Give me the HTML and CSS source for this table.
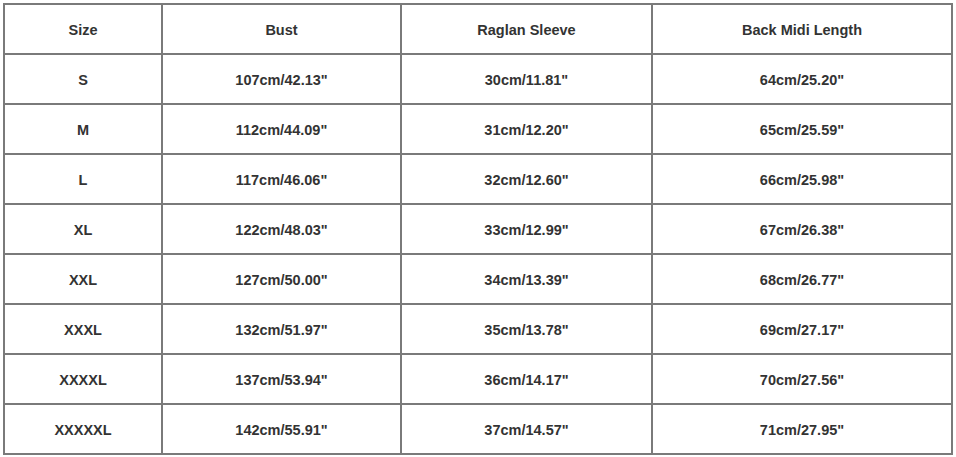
FILE: index.html
```html
<!DOCTYPE html>
<html>
<head>
<meta charset="utf-8">
<link rel="stylesheet" href="styles.css">
</head>
<body>
<div class="chart">
  <div class="cell">Size</div><div class="cell">Bust</div><div class="cell">Raglan Sleeve</div><div class="cell">Back Midi Length</div>
  <div class="cell">S</div><div class="cell">107cm/42.13"</div><div class="cell">30cm/11.81"</div><div class="cell">64cm/25.20"</div>
  <div class="cell">M</div><div class="cell">112cm/44.09"</div><div class="cell">31cm/12.20"</div><div class="cell">65cm/25.59"</div>
  <div class="cell">L</div><div class="cell">117cm/46.06"</div><div class="cell">32cm/12.60"</div><div class="cell">66cm/25.98"</div>
  <div class="cell">XL</div><div class="cell">122cm/48.03"</div><div class="cell">33cm/12.99"</div><div class="cell">67cm/26.38"</div>
  <div class="cell">XXL</div><div class="cell">127cm/50.00"</div><div class="cell">34cm/13.39"</div><div class="cell">68cm/26.77"</div>
  <div class="cell">XXXL</div><div class="cell">132cm/51.97"</div><div class="cell">35cm/13.78"</div><div class="cell">69cm/27.17"</div>
  <div class="cell">XXXXL</div><div class="cell">137cm/53.94"</div><div class="cell">36cm/14.17"</div><div class="cell">70cm/27.56"</div>
  <div class="cell">XXXXXL</div><div class="cell">142cm/55.91"</div><div class="cell">37cm/14.57"</div><div class="cell">71cm/27.95"</div>
</div>
</body>
</html>
```
FILE: styles.css
```css
html, body {
  margin: 0;
  padding: 0;
  background: #ffffff;
}
body {
  padding: 3px 0 0 3px;
  font-family: "Liberation Sans", Arial, sans-serif;
}
.chart {
  display: grid;
  grid-template-columns: 156px 237px 249px 298px;
  grid-auto-rows: 48px;
  gap: 2px;
  padding: 2px;
  width: max-content;
  background: #7a7a7a;
}
.cell {
  background: #ffffff;
  display: flex;
  align-items: center;
  justify-content: center;
  padding-top: 2px;
  box-sizing: border-box;
  font-size: 14.5px;
  font-weight: bold;
  color: #333333;
}
```
